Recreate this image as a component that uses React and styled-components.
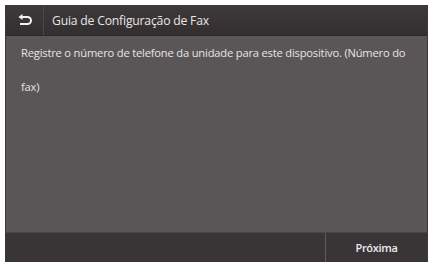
import React from "react";
import styled, { createGlobalStyle } from "styled-components";

const GlobalStyle = createGlobalStyle`
  html, body {
    margin: 0;
    padding: 0;
    background: #ffffff;
  }
  body {
    font-family: "Open Sans", "DejaVu Sans", sans-serif;
  }
`;

const Page = styled.div`
  width: 432px;
  height: 262px;
  padding: 5px 4px 0 5px;
  box-sizing: border-box;
  display: flex;
`;

const Screen = styled.div`
  flex: 1;
  display: flex;
  flex-direction: column;
  background: #5a5657;
  border-left: 1px solid #3c3839;
  border-right: 1px solid #3c3839;
`;

const Header = styled.div`
  height: 30px;
  display: flex;
  align-items: stretch;
  background: linear-gradient(#3e3a3b, #332f30);
  border-bottom: 1px solid #2b2829;
`;

const BackButton = styled.div`
  width: 37px;
  display: flex;
  align-items: center;
  justify-content: center;
  border-right: 1px solid #4b4748;
`;

const Title = styled.div`
  display: flex;
  align-items: center;
  padding-left: 8px;
  color: #e8e6e6;
  font-size: 12.2px;
  font-weight: 500;
  letter-spacing: -0.2px;
`;

const Body = styled.div`
  flex: 1;
  padding: 0 12px 0 15px;
  color: #e6e4e4;
  font-size: 11.2px;
  font-weight: 500;
  line-height: 34px;
  letter-spacing: -0.2px;
`;

const Footer = styled.div`
  height: 29px;
  display: flex;
  background: #393536;
  border-top: 1px solid #4a4647;
`;

const Spacer = styled.div`
  flex: 1;
`;

const NextButton = styled.div`
  width: 101px;
  display: flex;
  align-items: center;
  justify-content: center;
  border-left: 1px solid #5e5a5b;
  color: #eeeced;
  font-size: 11px;
  font-weight: 600;
  letter-spacing: -0.3px;
`;

const BackIcon = () => (
  <svg width="16" height="13" viewBox="0 0 16 13" fill="none">
    <path d="M4.5 3 H10.5 A3.5 3.5 0 0 1 10.5 10 H3" stroke="#f2f2f2" strokeWidth="2" />
    <path d="M5.5 0 L1.5 3 L5.5 6 Z" fill="#f2f2f2" />
  </svg>
);

export default function App() {
  return (
    <>
      <GlobalStyle />
      <Page>
        <Screen>
          <Header>
            <BackButton>
              <BackIcon />
            </BackButton>
            <Title>Guia de Configuração de Fax</Title>
          </Header>
          <Body>
            Registre o número de telefone da unidade para este dispositivo. (Número do fax)
          </Body>
          <Footer>
            <Spacer />
            <NextButton>Próxima</NextButton>
          </Footer>
        </Screen>
      </Page>
    </>
  );
}
